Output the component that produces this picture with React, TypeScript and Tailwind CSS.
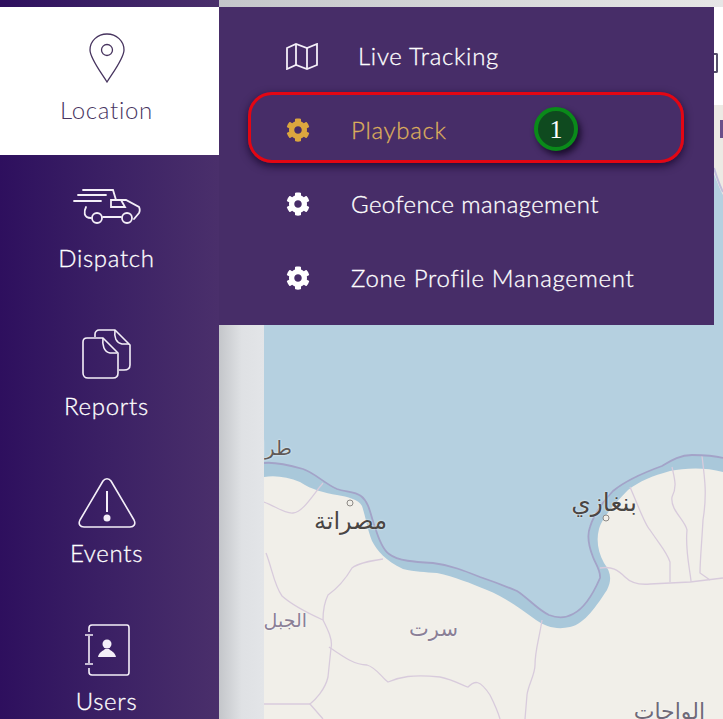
import { FaCog } from "react-icons/fa";

const coast =
	"M264 463 C272 462 285 464 303 469 C315 473 325 484 337 489 C345 492 355 491 361 496 C370 503 371 518 375 527 C378 537 382 549 389 554 C398 561 415 562 433 563 C450 565 465 571 480 577 C495 582 505 586 517 591 C528 598 538 610 549 615 C557 618 566 618 573 614 C585 608 594 592 600 578 C601 571 595 563 593 557 C589 547 587 535 590 527 C593 517 600 505 613 491 C625 481 640 474 662 466 C672 460 680 455 692 455 C702 455 712 455 723 458";
const landEdge =
	"M264 477 C275 475 288 477 300 482 C312 490 325 493 337 495 C348 497 358 499 362 506 C366 518 367 528 372 541 C378 552 385 560 403 569 C415 572 425 572 437 573 C455 577 470 583 487 590 C505 597 522 610 536 620 C546 627 557 630 570 627 C585 624 597 605 607 590 C612 580 611 572 604 563 C598 552 596 540 599 529 C602 518 615 503 628 490 C640 481 652 476 670 471 C685 468 705 467 723 472";

const borders = [
	"M264 502 C275 506 285 514 293 513 C303 512 312 496 323 483",
	"M266 553 C272 568 274 585 282 596 C292 605 312 615 323 620 C328 630 333 640 331 648 L328 677 C325 690 315 700 310 704 L323 719",
	"M264 704 L310 704",
	"M383 559 C370 561 358 563 352 568 C345 580 335 590 328 595 C324 603 323 612 323 620",
	"M329 647 C345 658 355 665 367 665 C377 668 382 678 388 682 C400 677 412 674 440 677 C455 680 465 687 468 687 C475 680 480 680 490 695 C495 705 498 712 500 719",
	"M542 620 C539 640 535 650 535 665 C535 675 528 685 527 695 L525 719",
	"M600 568 C612 566 618 570 625 577 C632 584 640 585 650 584 L690 582 L723 578",
	"M630 487 C640 510 645 525 650 530 C660 545 667 552 670 562 L670 582",
	"M672 467 C675 480 677 487 672 497 C670 510 685 520 687 530 C685 550 690 570 691 581",
	"M702 456 C705 480 707 495 703 520 C702 540 700 560 700 573 L710 580",
];

const mapLabels = [
	{ text: "طرابلس", className: "right-[431px] top-[333px] text-[20px] text-[#5f5a58]" },
	{ text: "مصراتة", className: "right-[336px] top-[404px] text-[24px] text-[#4a4644]" },
	{ text: "بنغازي", className: "right-[86px] top-[385px] text-[25px] text-[#4a4644]" },
	{ text: "سرت", className: "right-[265px] top-[514px] text-[21px] text-[#8a7f96]" },
	{ text: "الجبل الغربي", className: "right-[416px] top-[506px] text-[19px] text-[#8a7f96]" },
	{ text: "الواحات", className: "right-[18px] top-[596px] text-[22px] text-[#6f6a78]" },
];

function PinIcon() {
	return (
		<svg width="38" height="50" viewBox="0 0 38 50" fill="none" stroke="#47345f" strokeWidth="1.3">
			<path d="M19 1 C9.500 1 2 8 2 17 C2 25 12 38 19 49 C26 38 36 25 36 17 C36 8 28.500 1 19 1 Z" />
			<circle cx="19" cy="17" r="5.500" />
		</svg>
	);
}

function TruckIcon() {
	return (
		<svg width="68" height="36" viewBox="0 0 68 36" fill="none" stroke="#f4eff8" strokeWidth="1.800" strokeLinecap="round">
			<path d="M10 2 H35 M5 7 H33 M1 13 H28" />
			<path d="M35 2 H40 L43 12 H53 L66 19 C67 21 67 23 66 25 L61 31" />
			<path d="M38 12 H48 L52 19 H38 Z" />
			<path d="M13 19 C11 23 10 30 18 30" />
			<path d="M30 29 H48" />
			<circle cx="24" cy="30" r="5" />
			<circle cx="54" cy="30" r="5" />
		</svg>
	);
}

function ReportsIcon() {
	return (
		<svg width="50" height="50" viewBox="0 0 50 50" fill="none" stroke="#f4eff8" strokeWidth="1.600" strokeLinejoin="round">
			<path d="M13 8 V5 C13 3 15 1 17 1 H33 L48 16 V36 C48 39 46 41 42 41 H37" />
			<path d="M33 1 C32 8 34 14 40 15 L47 15" />
			<path d="M5 9 H21 L36 24 V44 C36 47 34 49 31 49 H6 C3 49 1 47 1 44 V13 C1 10 3 9 5 9 Z" />
			<path d="M21 9 C20 16 22 23 28 24 L35 24" />
		</svg>
	);
}

function EventsIcon() {
	return (
		<svg width="58" height="52" viewBox="0 0 58 52" fill="none" stroke="#f4eff8" strokeWidth="1.600">
			<path d="M25 4 C27 1 31 1 33 4 L56 43 C58 47 56 50 52 50 H6 C2 50 0 47 2 43 Z" strokeLinejoin="round" />
			<path d="M29 14 V35" strokeWidth="2" />
			<circle cx="29" cy="41" r="3.500" fill="#f4eff8" stroke="none" />
		</svg>
	);
}

function UsersIcon() {
	return (
		<svg width="46" height="52" viewBox="0 0 46 52" fill="none" stroke="#f4eff8" strokeWidth="1.600">
			<path d="M5 8 V4 C5 2 6 1 8 1 H43 C44 1 45 2 45 4 V48 C45 50 44 51 43 51 H8 C6 51 5 50 5 48 V44" />
			<path d="M5 12 V39 M1 11 H9 M1 40 H9" />
			<circle cx="23" cy="20" r="4.500" fill="#f4eff8" stroke="none" />
			<path d="M14 33 C15 28 19 27 21 25 H25 C27 27 31 28 32 33 Z" fill="#f4eff8" stroke="none" />
		</svg>
	);
}

function MapIcon() {
	return (
		<svg width="32" height="27" viewBox="0 0 32 27" fill="none" stroke="#f4eff8" strokeWidth="1.800" strokeLinejoin="miter">
			<path d="M1 5 L10 1 L21 5 L31 1 V22 L21 26 L10 22 L1 26 Z" />
			<path d="M10 1 V22 M21 5 V26" />
		</svg>
	);
}

const labelClass = "text-[24px] leading-[30px] font-light tracking-[0.7px] whitespace-nowrap";
const menuRow = "h-[74px] flex items-center text-[24px] font-light tracking-[0.7px] whitespace-nowrap [-webkit-text-stroke:0.3px]";

export default function App() {
	return (
		<div className="relative w-[723px] h-[719px] overflow-hidden flex bg-white font-['Lato','Liberation_Sans',sans-serif]">
			{/* Sidebar */}
			<div className="w-[219px] h-full shrink-0 pt-[7px] bg-gradient-to-r from-[#2e0f5e] to-[#4a2f6b]">
				<div className="h-[148px] bg-white flex flex-col items-center pt-[26px] pr-[6px]">
					<PinIcon />
					<span className={`mt-[12px] text-[#47345f] ${labelClass}`}>Location</span>
				</div>
				<div className="flex flex-col items-center pr-[6px] text-white [-webkit-text-stroke:0.3px]">
					<div className="mt-[33px]"><TruckIcon /></div>
					<span className={`mt-[19px] ${labelClass}`}>Dispatch</span>
					<div className="mt-[56px]"><ReportsIcon /></div>
					<span className={`mt-[12px] ${labelClass}`}>Reports</span>
					<div className="mt-[56px]"><EventsIcon /></div>
					<span className={`mt-[9px] ${labelClass}`}>Events</span>
					<div className="mt-[56px]"><UsersIcon /></div>
					<span className={`mt-[10px] ${labelClass}`}>Users</span>
				</div>
			</div>

			{/* Right side */}
			<div className="flex-1 h-full flex flex-col">
				<div className="h-[7px] bg-gradient-to-r from-[#c4c6ca] to-[#e6e6e6]" />
				<div className="h-[98px] bg-white flex justify-end pr-[5px] pt-[46px]">
					<div className="w-[4px] h-[20px] rounded-r-[2px] border-r-2 border-y-2 border-[#55506a]" />
				</div>
				<div className="flex-1 flex">
					<div className="w-[45px] shrink-0 bg-gradient-to-r from-[#c4c6ca] via-[#dfe1e4] to-[#e3e5e8]" />
					<div className="relative flex-1 overflow-hidden bg-[#b5d0e0]">
						<svg className="absolute left-0 top-0 blur-[0.4px]" width="459" height="614" viewBox="264 105 459 614" fill="none">
							<path d="M710 105 H723 V195 C720 190 716 178 710 165 Z" fill="#eceae4" />
							<path d="M714 168 C717 178 720 186 723 192" stroke="#c0bedb" strokeWidth="2" />
							<rect x="720" y="120" width="3" height="18" fill="#6b4f8a" />
							<path d={`${coast} L723 719 L264 719 Z`} fill="#a9c8da" />
							<path d={`${landEdge} L723 719 L264 719 Z`} fill="#f1efe9" />
							{borders.map((d) => (
								<path key={d} d={d} stroke="#d8cbdc" strokeWidth="1.300" />
							))}
							<path d={coast} stroke="#a3a3c8" strokeWidth="1.800" />
							<circle cx="350" cy="503" r="3" fill="#f1efe9" stroke="#8d8985" strokeWidth="1" />
							<circle cx="606" cy="518" r="3" fill="#f1efe9" stroke="#8d8985" strokeWidth="1" />
						</svg>
						{mapLabels.map((l) => (
							<span
								key={l.text}
								dir="rtl"
								className={`absolute whitespace-nowrap font-['DejaVu_Sans',sans-serif] leading-none [text-shadow:0_0_2px_#ffffff] ${l.className}`}
							>
								{l.text}
							</span>
						))}
					</div>
				</div>
			</div>

			{/* Location submenu */}
			<div className="absolute left-[219px] top-[7px] w-[495px] h-[318px] bg-[#472d68] pt-[12px] pl-[67px] text-white">
				<div className={menuRow}>
					<MapIcon />
					<span className="ml-[40px]">Live Tracking</span>
				</div>
				<div className={`relative ${menuRow} text-[#dcae5c]`}>
					<FaCog className="text-[24px] text-[#dba63e]" />
					<span className="ml-[41px]">Playback</span>
					<div className="absolute left-[-38px] top-[-1px] w-[436px] h-[71px] rounded-[24px] border-[3px] border-[#e30613] shadow-[0_3px_8px_rgba(20,5,40,0.8)]" />
					<div className="absolute left-[248px] top-[14px] w-[44px] h-[44px] rounded-full border-[4px] border-[#0a8a1a] bg-[#0f4a1f] shadow-[3px_4px_6px_rgba(15,5,30,0.8)] flex items-center justify-center text-[26px] text-white font-normal font-['Liberation_Serif',serif] tracking-normal [-webkit-text-stroke:0px]">
						1
					</div>
				</div>
				<div className={menuRow}>
					<FaCog className="text-[24px]" />
					<span className="ml-[41px] tracking-[0.4px]">Geofence management</span>
				</div>
				<div className={menuRow}>
					<FaCog className="text-[24px]" />
					<span className="ml-[41px]">Zone Profile Management</span>
				</div>
			</div>
		</div>
	);
}
